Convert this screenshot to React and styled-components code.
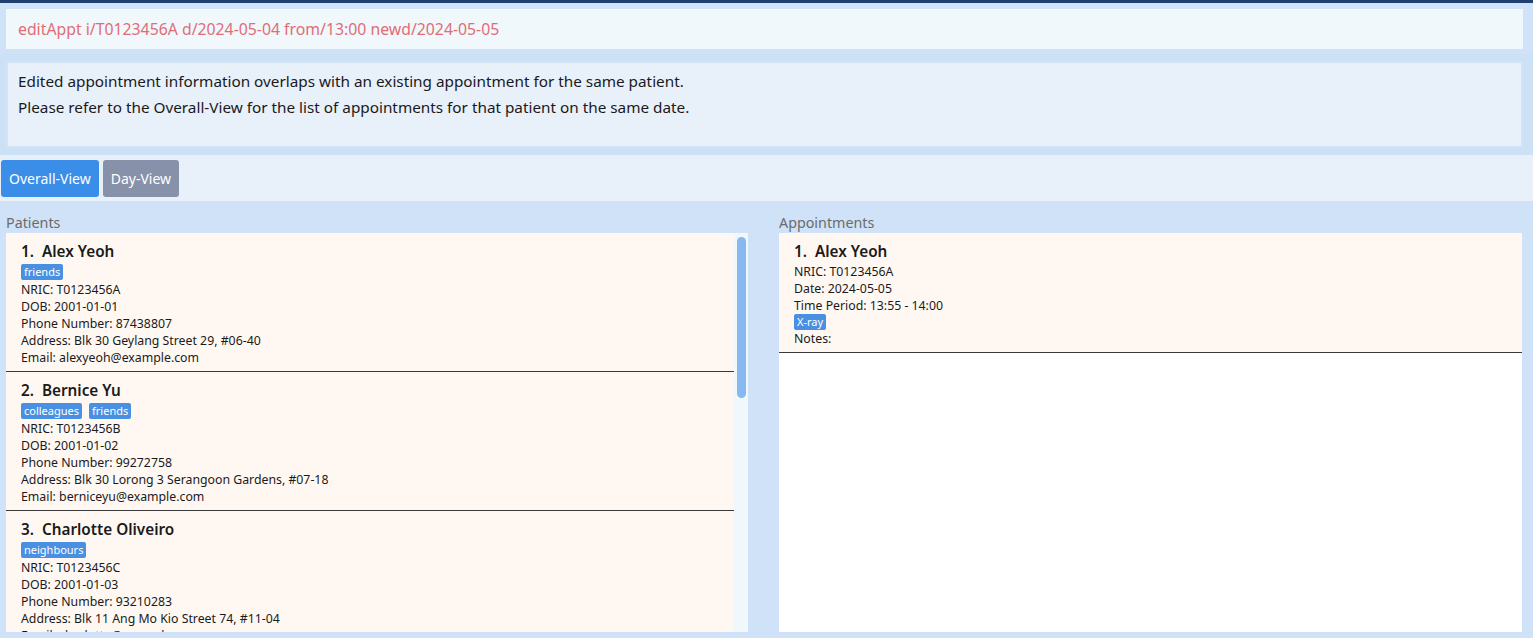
import React from 'react';
import styled, { createGlobalStyle } from 'styled-components';

const GlobalStyle = createGlobalStyle`
  html, body {
    margin: 0;
    padding: 0;
    background: #cfe2f7;
  }
  body {
    font-family: 'Noto Sans', 'Open Sans', sans-serif;
    color: #1c1c1c;
  }
`;

const patients = [
  {
    name: 'Alex Yeoh',
    tags: ['friends'],
    nric: 'T0123456A',
    dob: '2001-01-01',
    phone: '87438807',
    address: 'Blk 30 Geylang Street 29, #06-40',
    email: 'alexyeoh@example.com',
  },
  {
    name: 'Bernice Yu',
    tags: ['colleagues', 'friends'],
    nric: 'T0123456B',
    dob: '2001-01-02',
    phone: '99272758',
    address: 'Blk 30 Lorong 3 Serangoon Gardens, #07-18',
    email: 'berniceyu@example.com',
  },
  {
    name: 'Charlotte Oliveiro',
    tags: ['neighbours'],
    nric: 'T0123456C',
    dob: '2001-01-03',
    phone: '93210283',
    address: 'Blk 11 Ang Mo Kio Street 74, #11-04',
    email: 'charlotte@example.com',
  },
];

const appointments = [
  {
    name: 'Alex Yeoh',
    nric: 'T0123456A',
    date: '2024-05-05',
    period: '13:55 - 14:00',
    tags: ['X-ray'],
  },
];

const Page = styled.div`
  height: 638px;
  display: flex;
  flex-direction: column;
  border-top: 3px solid #1f3f70;
  box-sizing: border-box;
  overflow: hidden;
`;

const CommandBox = styled.div`
  margin: 6px 10px 0 6px;
  height: 40px;
  background: #f0f8fc;
  display: flex;
  align-items: center;
  padding-left: 12px;
  font-size: 15.8px;
  color: #e06d76;
`;

const ResultWrap = styled.div`
  margin-top: 5px;
  padding: 7px 10px 7px 6px;
  background: #cde1f6;
`;

const ResultBox = styled.div`
  height: 87px;
  box-sizing: border-box;
  background: #e8f0fa;
  border: 2px solid #d3e3f6;
  padding: 5px 10px;
  font-size: 15.3px;
  line-height: 26px;
  color: #1a1a1a;
`;

const Toolbar = styled.div`
  height: 46px;
  background: #e8f0fa;
  display: flex;
  align-items: center;
  gap: 4px;
  padding-left: 1px;
`;

const ViewButton = styled.button`
  height: 37px;
  border: none;
  border-radius: 3px;
  padding: 0 8px;
  font-family: inherit;
  font-size: 14px;
  color: #ffffff;
  background: ${(p) => (p.$active ? '#3b8ee8' : '#8891aa')};
`;

const Columns = styled.div`
  flex: 1;
  display: grid;
  grid-template-columns: 742px 743px;
  column-gap: 31px;
  padding: 12px 11px 6px 6px;
  min-height: 0;
`;

const Column = styled.div`
  display: flex;
  flex-direction: column;
  min-height: 0;
`;

const ColumnTitle = styled.div`
  font-size: 14.3px;
  color: #6b6b6b;
  height: 20px;
  line-height: 20px;
`;

const ListPanel = styled.div`
  flex: 1;
  display: flex;
  background: ${(p) => p.$bg};
  min-height: 0;
  overflow: hidden;
`;

const ListBody = styled.div`
  flex: 1;
  display: flex;
  flex-direction: column;
  min-width: 0;
`;

const ScrollTrack = styled.div`
  width: 14px;
  background: #f0f8fc;
  padding: 4px 2px 0 3px;
  box-sizing: border-box;
`;

const ScrollThumb = styled.div`
  height: 161px;
  border-radius: 5px;
  background: #88b8f0;
`;

const Card = styled.div`
  flex-shrink: 0;
  background: #fff8f2;
  padding: 8px 15px 5px;
  border-bottom: 1px solid #3a3a3a;
`;

const CardName = styled.div`
  height: 20px;
  line-height: 20px;
  font-size: 15.3px;
  font-weight: 600;
  color: #1a1a1a;
  white-space: pre;
`;

const TagRow = styled.div`
  display: flex;
  gap: 7px;
  margin: ${(p) => (p.$compact ? '0' : '3px 0 1px')};
`;

const Tag = styled.span`
  height: 16px;
  line-height: 16px;
  padding: 0 3px;
  border-radius: 2px;
  background: #4a90e2;
  color: #ffffff;
  font-size: 11px;
`;

const Field = styled.div`
  height: 17px;
  line-height: 17px;
  font-size: 12.3px;
  color: #1a1a1a;
  white-space: nowrap;
`;

const FirstField = styled(Field)`
  margin-top: 2px;
`;

const PatientCard = ({ index, p }) => (
  <Card>
    <CardName>{`${index}.  ${p.name}`}</CardName>
    <TagRow>
      {p.tags.map((t) => (
        <Tag key={t}>{t}</Tag>
      ))}
    </TagRow>
    <Field>NRIC: {p.nric}</Field>
    <Field>DOB: {p.dob}</Field>
    <Field>Phone Number: {p.phone}</Field>
    <Field>Address: {p.address}</Field>
    <Field>Email: {p.email}</Field>
  </Card>
);

const AppointmentCard = ({ index, a }) => (
  <Card>
    <CardName>{`${index}.  ${a.name}`}</CardName>
    <FirstField>NRIC: {a.nric}</FirstField>
    <Field>Date: {a.date}</Field>
    <Field>Time Period: {a.period}</Field>
    <TagRow $compact>
      {a.tags.map((t) => (
        <Tag key={t}>{t}</Tag>
      ))}
    </TagRow>
    <Field>Notes:</Field>
  </Card>
);

export default function App() {
  return (
    <>
      <GlobalStyle />
      <Page>
        <CommandBox>editAppt i/T0123456A d/2024-05-04 from/13:00 newd/2024-05-05</CommandBox>
        <ResultWrap>
          <ResultBox>
            Edited appointment information overlaps with an existing appointment for the same patient.
            <br />
            Please refer to the Overall-View for the list of appointments for that patient on the same date.
          </ResultBox>
        </ResultWrap>
        <Toolbar>
          <ViewButton $active>Overall-View</ViewButton>
          <ViewButton>Day-View</ViewButton>
        </Toolbar>
        <Columns>
          <Column>
            <ColumnTitle>Patients</ColumnTitle>
            <ListPanel $bg="#fff8f2">
              <ListBody>
                {patients.map((p, i) => (
                  <PatientCard key={p.nric} index={i + 1} p={p} />
                ))}
              </ListBody>
              <ScrollTrack>
                <ScrollThumb />
              </ScrollTrack>
            </ListPanel>
          </Column>
          <Column>
            <ColumnTitle>Appointments</ColumnTitle>
            <ListPanel $bg="#ffffff">
              <ListBody>
                {appointments.map((a, i) => (
                  <AppointmentCard key={a.nric} index={i + 1} a={a} />
                ))}
              </ListBody>
            </ListPanel>
          </Column>
        </Columns>
      </Page>
    </>
  );
}
